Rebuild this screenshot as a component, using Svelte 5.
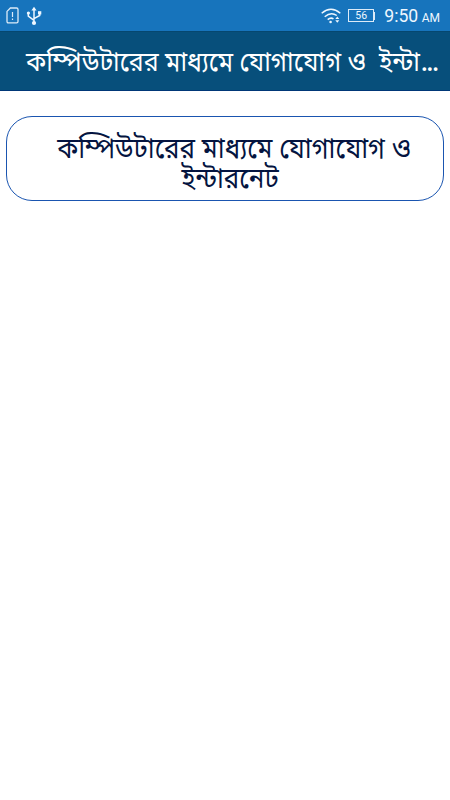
<script>
  const title = 'কম্পিউটারের মাধ্যমে যোগাযোগ ও\u00a0 ইন্টা';
  const lines = ['কম্পিউটারের মাধ্যমে যোগাযোগ ও', 'ইন্টারনেট'];
</script>

<div class="screen">
  <div class="status">
    <svg class="sim" width="13" height="17" viewBox="0 0 13 17" fill="none" stroke="#dcebf8" stroke-width="1.3">
      <path d="M4.4 1H10.6Q12 1 12 2.4V14.4Q12 15.8 10.6 15.8H2.4Q1 15.8 1 14.4V4.4Z" />
      <path d="M6.5 5V10M6.5 11.5V13" stroke-width="1.2" />
    </svg>
    <svg class="usb" width="16" height="20" viewBox="0 0 16 20" fill="none" stroke="#eef7ff" stroke-width="1.5">
      <path d="M8 3V17M2.3 7V10.2L8 14.3M13.7 7V9.5L8 12.6" />
      <path d="M8 0.7L10.6 4.5H5.4Z" fill="#eef7ff" stroke="none" />
      <circle cx="8" cy="17" r="2.1" fill="#eef7ff" stroke="none" />
      <circle cx="2.4" cy="7" r="1.6" fill="#eef7ff" stroke="none" />
      <path d="M12 5.2H15.3V8.5H12Z" fill="#eef7ff" stroke="none" />
    </svg>
    <span class="grow"></span>
    <svg class="wifi" width="20" height="16" viewBox="0 0 20 16" fill="none" stroke="#eef7ff" stroke-width="1.5">
      <path d="M.7 5.2Q10-2.6 19.3 5.2M3.7 8.7Q10 3.3 15.8 7.5M6.7 11.6Q9.6 9.1 12.5 10.8" />
      <circle cx="9.6" cy="14" r="1.3" fill="#eef7ff" stroke="none" />
      <path d="M14.3 10.9L16.3 8.4L18.3 10.9ZM14.3 12.2L16.3 14.7L18.3 12.2Z" fill="#eef7ff" stroke="none" />
    </svg>
    <div class="battery">56</div>
    <i class="cap"></i>
    <span class="time">9:50</span><span class="ampm">AM</span>
  </div>
  <header><h1>{title}<span class="dots">...</span></h1></header>
  <main>
    <button>
      {#each lines as line, i}
        <span class:first={i === 0}>{line}</span>
      {/each}
    </button>
  </main>
</div>

<style>
  :global(body) { margin: 0; background: #fff; }
  .screen { width: 450px; height: 800px; overflow: hidden; background: #fff; font-family: "Noto Sans Bengali", "Noto Sans", "Open Sans", sans-serif; }
  .status { height: 31px; background: #1774bc; display: flex; align-items: center; box-sizing: border-box; padding: 0 10px 0 6px; color: #eef7ff; font-family: Roboto, sans-serif; }
  .usb { margin-left: 7px; }
  .grow { flex: 1; }
  .battery { box-sizing: border-box; width: 26px; height: 13px; border: 1.5px solid #dcebf8; margin-left: 7px; font-size: 10.5px; line-height: 11px; text-align: center; }
  .cap { width: 1px; height: 8px; background: #dcebf8; }
  .time { font-size: 17.6px; margin-left: 9px; line-height: 31px; padding-top: 2px; }
  .ampm { font-size: 12px; margin-left: 3.5px; padding-top: 5px; }
  header { box-sizing: border-box; height: 60px; background: #074f7b; border-top: 1px solid #06476f; border-bottom: 1px solid #003777; padding: 9px 0 0 26px; display: flex; align-items: center; }
  h1 { margin: 0; font-size: 25px; font-weight: 400; line-height: 40px; white-space: nowrap; color: #fff; transform: scaleY(1.1); transform-origin: 50% 75%; }
  .dots { font-weight: 700; font-size: 20px; margin-left: 1.5px; }
  main { padding: 25px 6px 0 6px; }
  button { display: block; box-sizing: border-box; width: 438px; height: 85px; border: 1px solid #1a55b0; border-radius: 26px; background: #fff; padding: 17px 0 0; margin: 0; font: inherit; color: #041440; font-size: 26px; line-height: 30px; text-align: center; }
  button span { display: block; white-space: nowrap; padding-left: 10px; transform: scaleY(1.1); transform-origin: 50% 85%; }
  button .first { padding-left: 18px; }
</style>
